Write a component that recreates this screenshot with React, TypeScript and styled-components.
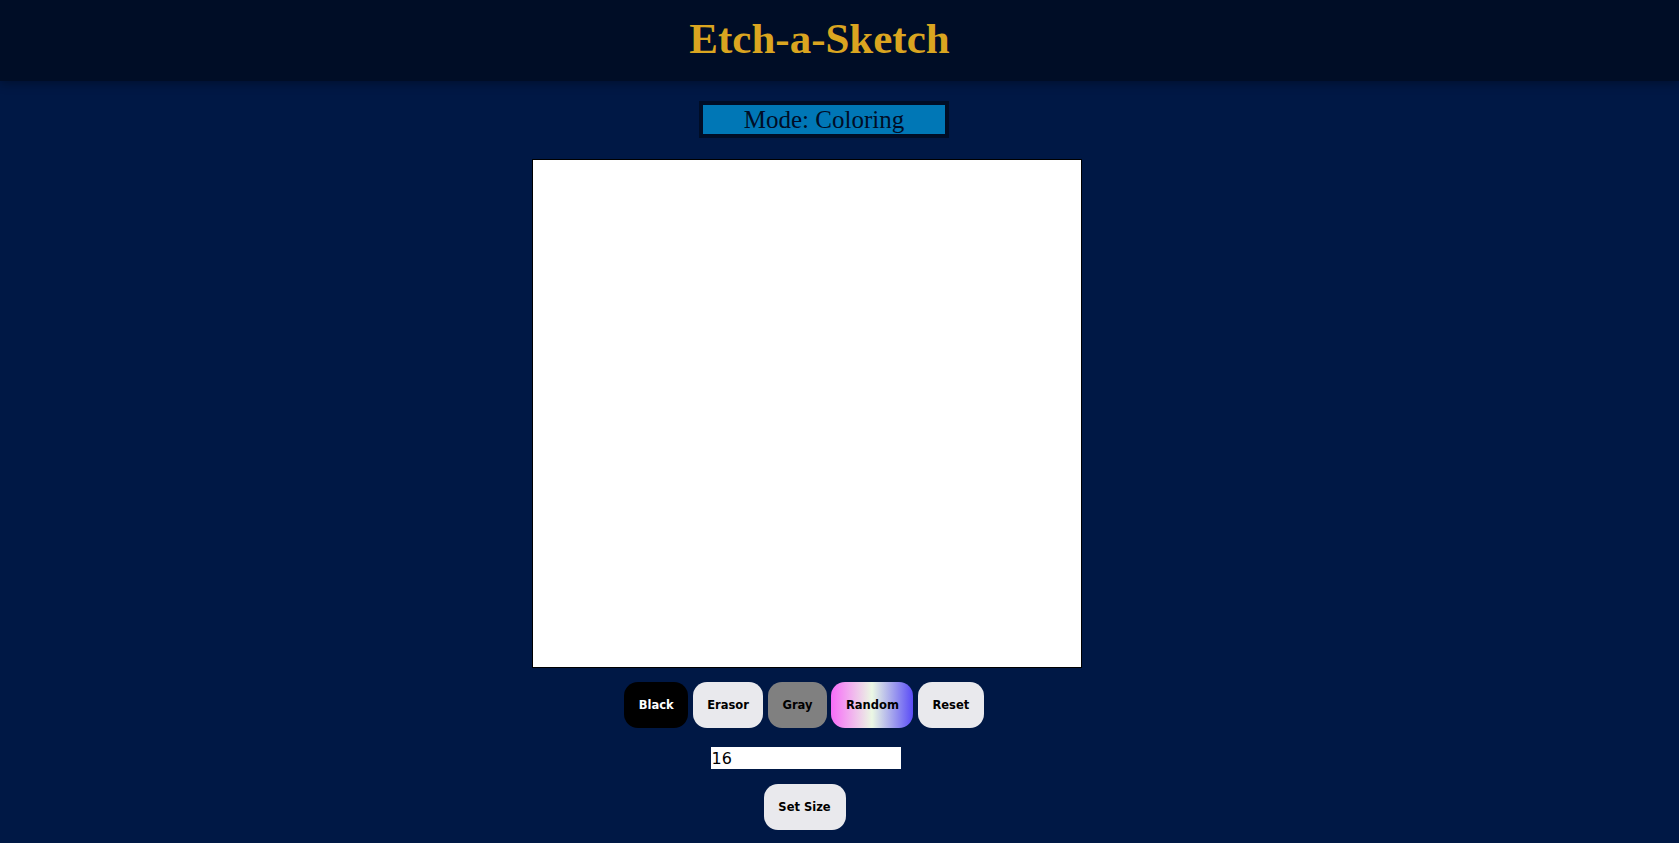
import React, { useState } from "react";
import styled, { createGlobalStyle, css } from "styled-components";

const GlobalStyle = createGlobalStyle`
  html, body {
    margin: 0;
    padding: 0;
    background: #001845;
    min-height: 100vh;
  }
  * { box-sizing: border-box; }
`;

const Page = styled.div`
  min-height: 100vh;
  background: #001845;
  display: flex;
  flex-direction: column;
`;

const Header = styled.header`
  height: 81px;
  background: #000d26;
  box-shadow: 0 2px 10px rgba(0, 0, 0, 0.35);
  display: flex;
  justify-content: center;
  align-items: flex-start;
  padding: 14px 40px 0 0;
  position: relative;
  z-index: 1;
`;

const Title = styled.h1`
  margin: 0;
  font-family: "Liberation Serif", "Times New Roman", serif;
  font-weight: 700;
  font-size: 43px;
  line-height: 49px;
  color: #daa520;
`;

const Main = styled.main`
  display: flex;
  flex-direction: column;
  align-items: center;
`;

const ModeBox = styled.div`
  margin: 20px 31px 0 0;
  width: 250px;
  height: 37px;
  border: 4px solid #000d26;
  background: #0077b6;
  color: #000d26;
  font-family: "Liberation Serif", "Times New Roman", serif;
  font-size: 25px;
  line-height: 29px;
  text-align: center;
`;

const Column = styled.div`
  margin-right: 66px;
  display: flex;
  flex-direction: column;
  align-items: center;
`;

const Canvas = styled.div`
  margin-top: 21px;
  width: 550px;
  height: 509px;
  border: 1px solid #000;
  background: #fff;
  display: grid;
  grid-template-columns: repeat(16, 1fr);
  grid-template-rows: repeat(16, 1fr);
`;

const Cell = styled.div`
  background: #fff;
`;

const ButtonRow = styled.div`
  margin: 14px 5px 0 0;
  display: flex;
  gap: 4.5px;
`;

type Variant = "black" | "light" | "gray" | "random";

const Btn = styled.button<{ $variant: Variant }>`
  height: 46px;
  padding: 0 14.5px;
  border: none;
  border-radius: 14px;
  font-family: "DejaVu Sans", Tahoma, Verdana, sans-serif;
  font-weight: 700;
  font-size: 11.5px;
  color: #000;
  background: #e9e9ed;
  cursor: pointer;
  ${(p) =>
    p.$variant === "black" &&
    css`
      background: #000;
      color: #fff;
    `}
  ${(p) =>
    p.$variant === "gray" &&
    css`
      background: #808080;
      color: #000;
    `}
  ${(p) =>
    p.$variant === "random" &&
    css`
      background: linear-gradient(90deg, #f76cf8 0%, #ebf8e4 50%, #5a4cf7 100%);
      color: #000;
    `}
`;

const SizeInput = styled.input`
  margin: 19px 2px 0 0;
  width: 190px;
  height: 22px;
  border: none;
  outline: none;
  padding: 0 1px;
  background: #fff;
  color: #000;
  font-family: "DejaVu Sans", Tahoma, Verdana, sans-serif;
  font-size: 16px;
`;

const SetSize = styled(Btn)`
  margin: 15px 4px 0 0;
  width: 82px;
  padding: 0;
`;

export default function App() {
  const [size, setSize] = useState("16");
  const cells = Array.from({ length: 256 });
  return (
    <Page>
      <GlobalStyle />
      <Header>
        <Title>Etch-a-Sketch</Title>
      </Header>
      <Main>
        <ModeBox>Mode: Coloring</ModeBox>
        <Column>
          <Canvas>
            {cells.map((_, i) => (
              <Cell key={i} />
            ))}
          </Canvas>
          <ButtonRow>
            <Btn $variant="black">Black</Btn>
            <Btn $variant="light">Erasor</Btn>
            <Btn $variant="gray">Gray</Btn>
            <Btn $variant="random">Random</Btn>
            <Btn $variant="light">Reset</Btn>
          </ButtonRow>
          <SizeInput value={size} onChange={(e) => setSize(e.target.value)} />
          <SetSize $variant="light">Set Size</SetSize>
        </Column>
      </Main>
    </Page>
  );
}
